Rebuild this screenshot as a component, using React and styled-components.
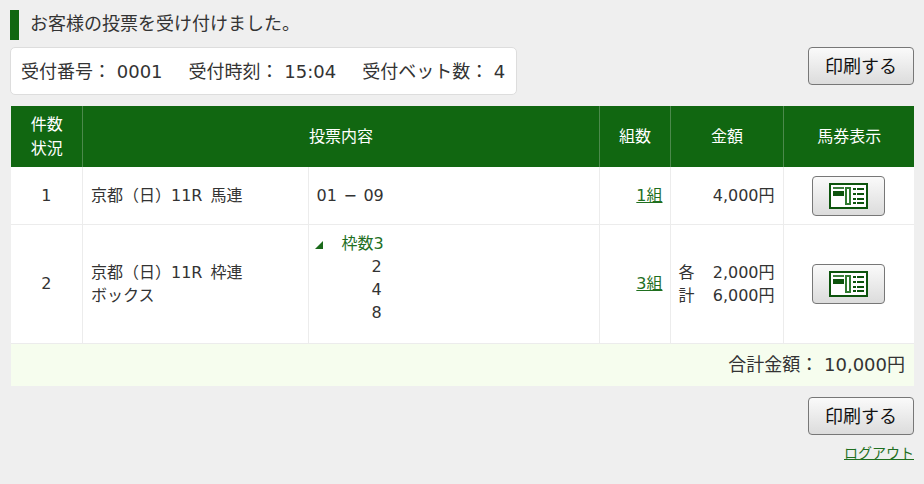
import styled, { createGlobalStyle } from "styled-components";

const GREEN = "#116711";

const GlobalStyle = createGlobalStyle`
  html, body {
    margin: 0;
    background: #efefef;
    color: #333;
    font-family: "DejaVu Sans", "Noto Sans CJK JP", sans-serif;
    font-size: 16px;
  }
`;

function TicketIcon() {
  return (
    <svg width="39" height="26" viewBox="0 0 39 26">
      <rect x="1" y="1" width="37" height="24" fill="#fff" stroke="#0d540d" strokeWidth="2" />
      <rect x="4" y="4" width="11" height="2" fill="#3d7f3d" />
      <rect x="4" y="8" width="11" height="5" fill="#0d540d" />
      <rect x="16" y="4" width="6" height="18" fill="#2f7a2f" />
      <rect x="18" y="6" width="2" height="14" fill="#fff" />
      <rect x="24" y="5" width="3" height="2" fill="#0d540d" />
      <rect x="28" y="5" width="7" height="2" fill="#0d540d" />
      <rect x="24" y="10" width="3" height="2" fill="#0d540d" />
      <rect x="28" y="10" width="7" height="2" fill="#0d540d" />
      <rect x="24" y="15" width="3" height="2" fill="#0d540d" />
      <rect x="28" y="15" width="7" height="2" fill="#0d540d" />
      <rect x="24" y="19" width="3" height="2" fill="#0d540d" />
      <rect x="28" y="19" width="7" height="2" fill="#0d540d" />
    </svg>
  );
}

export default function App() {
  return (
    <>
      <GlobalStyle />
      <Page>
        <Message>お客様の投票を受け付けました。</Message>
        <TopRow>
          <InfoBox>
            <span>受付番号： 0001</span>
            <span>受付時刻： 15:04</span>
            <span>受付ベット数： 4</span>
          </InfoBox>
          <PrintButton type="button">印刷する</PrintButton>
        </TopRow>
        <Table>
          <colgroup>
            <col width="71" />
            <col width="226" />
            <col width="291" />
            <col width="71" />
            <col width="113" />
            <col width="131" />
          </colgroup>
          <thead>
            <tr>
              <HeadCell>件数<br />状況</HeadCell>
              <HeadCell colSpan={2}>投票内容</HeadCell>
              <HeadCell>組数</HeadCell>
              <HeadCell>金額</HeadCell>
              <HeadCell>馬券表示</HeadCell>
            </tr>
          </thead>
          <tbody>
            <Row $height={57}>
              <NumberCell>1</NumberCell>
              <RaceCell>京都（日）11R 馬連</RaceCell>
              <Cell><Combination>01 − 09</Combination></Cell>
              <CountCell><CountLink href="#">1組</CountLink></CountCell>
              <RightCell>4,000円</RightCell>
              <IconCell>
                <TicketButton type="button"><TicketIcon /></TicketButton>
              </IconCell>
            </Row>
            <Row $height={119}>
              <NumberCell>2</NumberCell>
              <RaceCell>京都（日）11R 枠連<br />ボックス</RaceCell>
              <Cell>
                <BoxList>
                  <BoxLabel><Arrow />枠数3</BoxLabel>
                  <BoxNumber>2</BoxNumber>
                  <BoxNumber>4</BoxNumber>
                  <BoxNumber>8</BoxNumber>
                </BoxList>
              </Cell>
              <CountCell><CountLink href="#">3組</CountLink></CountCell>
              <Cell>
                <Amount><span>各</span><span>2,000円</span></Amount>
                <Amount><span>計</span><span>6,000円</span></Amount>
              </Cell>
              <IconCell>
                <TicketButton type="button"><TicketIcon /></TicketButton>
              </IconCell>
            </Row>
            <TotalRow>
              <td colSpan={6}>合計金額： 10,000円</td>
            </TotalRow>
          </tbody>
        </Table>
        <BottomActions>
          <PrintButton type="button">印刷する</PrintButton>
          <LogoutLink href="#">ログアウト</LogoutLink>
        </BottomActions>
      </Page>
    </>
  );
}

const Page = styled.div`
  width: 904px;
  padding: 10px 10px 0;
`;

const Message = styled.h2`
  margin: 0;
  height: 30px;
  padding-left: 11px;
  border-left: 9px solid ${GREEN};
  font-size: 18px;
  font-weight: normal;
  line-height: 28px;
  white-space: nowrap;
`;

const TopRow = styled.div`
  display: flex;
  justify-content: space-between;
  align-items: flex-start;
  margin-top: 7px;
`;

const InfoBox = styled.div`
  display: flex;
  gap: 26px;
  box-sizing: border-box;
  width: 507px;
  height: 48px;
  padding: 0 10px 3px;
  align-items: center;
  background: #fff;
  border: 1px solid #ddd;
  border-radius: 5px;
  font-size: 18px;
  white-space: nowrap;
`;

const PrintButton = styled.button`
  box-sizing: border-box;
  width: 106px;
  height: 38px;
  padding: 0 0 3px;
  border: 1px solid #777;
  border-radius: 4px;
  background: linear-gradient(#fafafa, #dcdcdc);
  color: #111;
  font-family: inherit;
  font-size: 18px;
`;

const Table = styled.table`
  width: 903px;
  margin: 11px 0 0 1px;
  border-collapse: collapse;
  table-layout: fixed;
  background: #fff;
`;

const HeadCell = styled.th`
  height: 61px;
  padding: 0 0 0 1px;
  background: ${GREEN};
  border-left: 1px solid #4c8a4c;
  color: #fff;
  font-size: 16px;
  font-weight: normal;
  line-height: 24px;
  &:first-child {
    border-left: 0;
  }
`;

const Row = styled.tr`
  height: ${(props) => props.$height}px;
  border-bottom: 1px solid #ececec;
`;

const Cell = styled.td`
  padding: 0 8px;
  border-left: 1px solid #ececec;
  font-size: 16px;
  line-height: 23px;
  white-space: nowrap;
  &:first-child {
    border-left: 0;
  }
`;

const NumberCell = styled(Cell)`
  text-align: center;
`;

const RaceCell = styled(Cell)`
  padding-left: 8.5px;
  word-spacing: 3px;
`;

const Combination = styled.span`
  word-spacing: 1.5px;
`;

const RightCell = styled(Cell)`
  text-align: right;
`;

const CountCell = styled(RightCell)`
  padding-right: 7px;
`;

const IconCell = styled(Cell)`
  padding: 1px 0 0;
`;

const CountLink = styled.a`
  color: #1f6f1f;
  text-decoration: underline;
`;

const TicketButton = styled.button`
  display: flex;
  align-items: center;
  justify-content: center;
  box-sizing: border-box;
  width: 73px;
  height: 40px;
  margin: 0 auto;
  padding: 0;
  border: 1px solid #777;
  border-radius: 4px;
  background: linear-gradient(#fafafa, #dcdcdc);
`;

const BoxList = styled.div`
  display: flex;
  flex-direction: column;
  padding-bottom: 12px;
`;

const BoxLabel = styled.div`
  display: flex;
  align-items: center;
  color: #1f6f1f;
`;

const Arrow = styled.i`
  width: 0;
  height: 0;
  margin: 4px 19px 0 -2px;
  border-style: solid;
  border-width: 0 0 8px 8px;
  border-color: transparent transparent #1a6a1a transparent;
`;

const BoxNumber = styled.div`
  padding-left: 55px;
`;

const Amount = styled.div`
  display: flex;
  justify-content: space-between;
`;

const TotalRow = styled.tr`
  height: 43px;
  background: #f6fdee;
  font-size: 18px;
  text-align: right;
  td {
    padding: 0 9px 3px;
  }
`;

const BottomActions = styled.div`
  display: flex;
  flex-direction: column;
  align-items: flex-end;
  margin-top: 11px;
`;

const LogoutLink = styled.a`
  margin-top: 8px;
  color: #1f6f1f;
  font-size: 14px;
  line-height: 20px;
  text-decoration: underline;
`;
